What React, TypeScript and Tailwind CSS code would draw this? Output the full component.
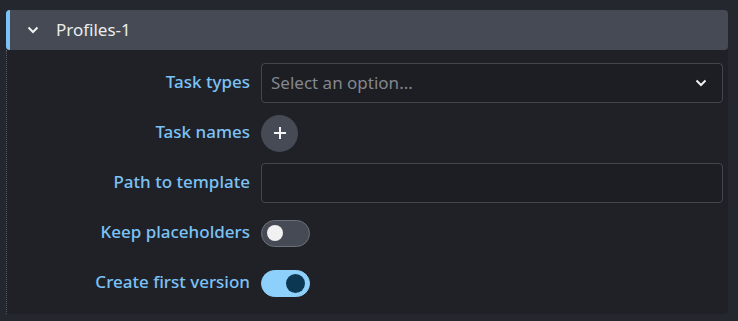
import { useState } from "react";

const label = "pb-[3px] text-right text-[17px] font-medium text-[#7cc2f6] leading-none";

function Chevron({ className }: { className?: string }) {
  return (
    <svg viewBox="0 0 12 8" className={className} fill="none" stroke="currentColor" strokeWidth={2}>
      <path d="M1.5 1.5 6 6l4.5-4.5" />
    </svg>
  );
}

function Toggle({ on, onChange }: { on: boolean; onChange: () => void }) {
  return (
    <button
      onClick={onChange}
      className={`flex h-[27px] w-[49px] items-center rounded-full border px-[5px] ${
        on ? "justify-end border-[#8dd0fb] bg-[#8dd0fb] pr-[4px]" : "justify-start border-[#6c7079] bg-[#454a55]"
      }`}
    >
      <span
        className={`block rounded-full ${on ? "h-[19px] w-[19px] bg-[#0b3752]" : "h-[16px] w-[16px] bg-[#f1f1f1]"}`}
      />
    </button>
  );
}

export default function App() {
  const [keep, setKeep] = useState(false);
  const [first, setFirst] = useState(true);

  return (
    <div className="h-[321px] w-[738px] bg-[#24272d] pt-[10px] pl-[6px] pr-[10px] font-['Noto_Sans',sans-serif]">
      {/* Header */}
      <div className="flex h-[40px] items-center overflow-hidden rounded-[4px] bg-[#454a54]">
        <div className="h-full w-[4px] bg-[#7cc2f6]" />
        <Chevron className="ml-[17px] h-[8px] w-[12px] text-[#f2f2f2]" />
        <span className="ml-[17px] pb-[1px] text-[17px] text-[#ececec]">Profiles-1</span>
      </div>

      {/* Body */}
      <div className="grid grid-cols-[243px_1fr] items-center gap-x-[11px] gap-y-[10px] rounded-br-[4px] border-l border-dotted border-[#575b63] bg-[#1f2126] pt-[13px] pr-[5px] pb-[11px]">
        <div className={label}>Task types</div>
        <div className="flex h-[40px] items-center justify-between rounded-[4px] border border-[#43464d] bg-[#1c1e23] pl-[9px] pr-[15px]">
          <span className="text-[17px] text-[#84878d]">Select an option...</span>
          <Chevron className="h-[8px] w-[12px] text-[#f0f0f0]" />
        </div>

        <div className={label}>Task names</div>
        <div className="flex h-[40px] items-center">
          <button className="flex h-[37px] w-[37px] items-center justify-center rounded-full bg-[#454a55]">
            <svg viewBox="0 0 12 12" className="h-[12px] w-[12px]" stroke="#f4f4f4" strokeWidth={2}>
              <path d="M6 0v12M0 6h12" />
            </svg>
          </button>
        </div>

        <div className={label}>Path to template</div>
        <input className="h-[40px] rounded-[4px] border border-[#43464d] bg-[#1c1e23] px-[9px] text-[16px] text-white outline-none" />

        <div className={label}>Keep placeholders</div>
        <div className="flex h-[40px] items-center">
          <Toggle on={keep} onChange={() => setKeep(!keep)} />
        </div>

        <div className={label}>Create first version</div>
        <div className="flex h-[40px] items-center">
          <Toggle on={first} onChange={() => setFirst(!first)} />
        </div>
      </div>
    </div>
  );
}
